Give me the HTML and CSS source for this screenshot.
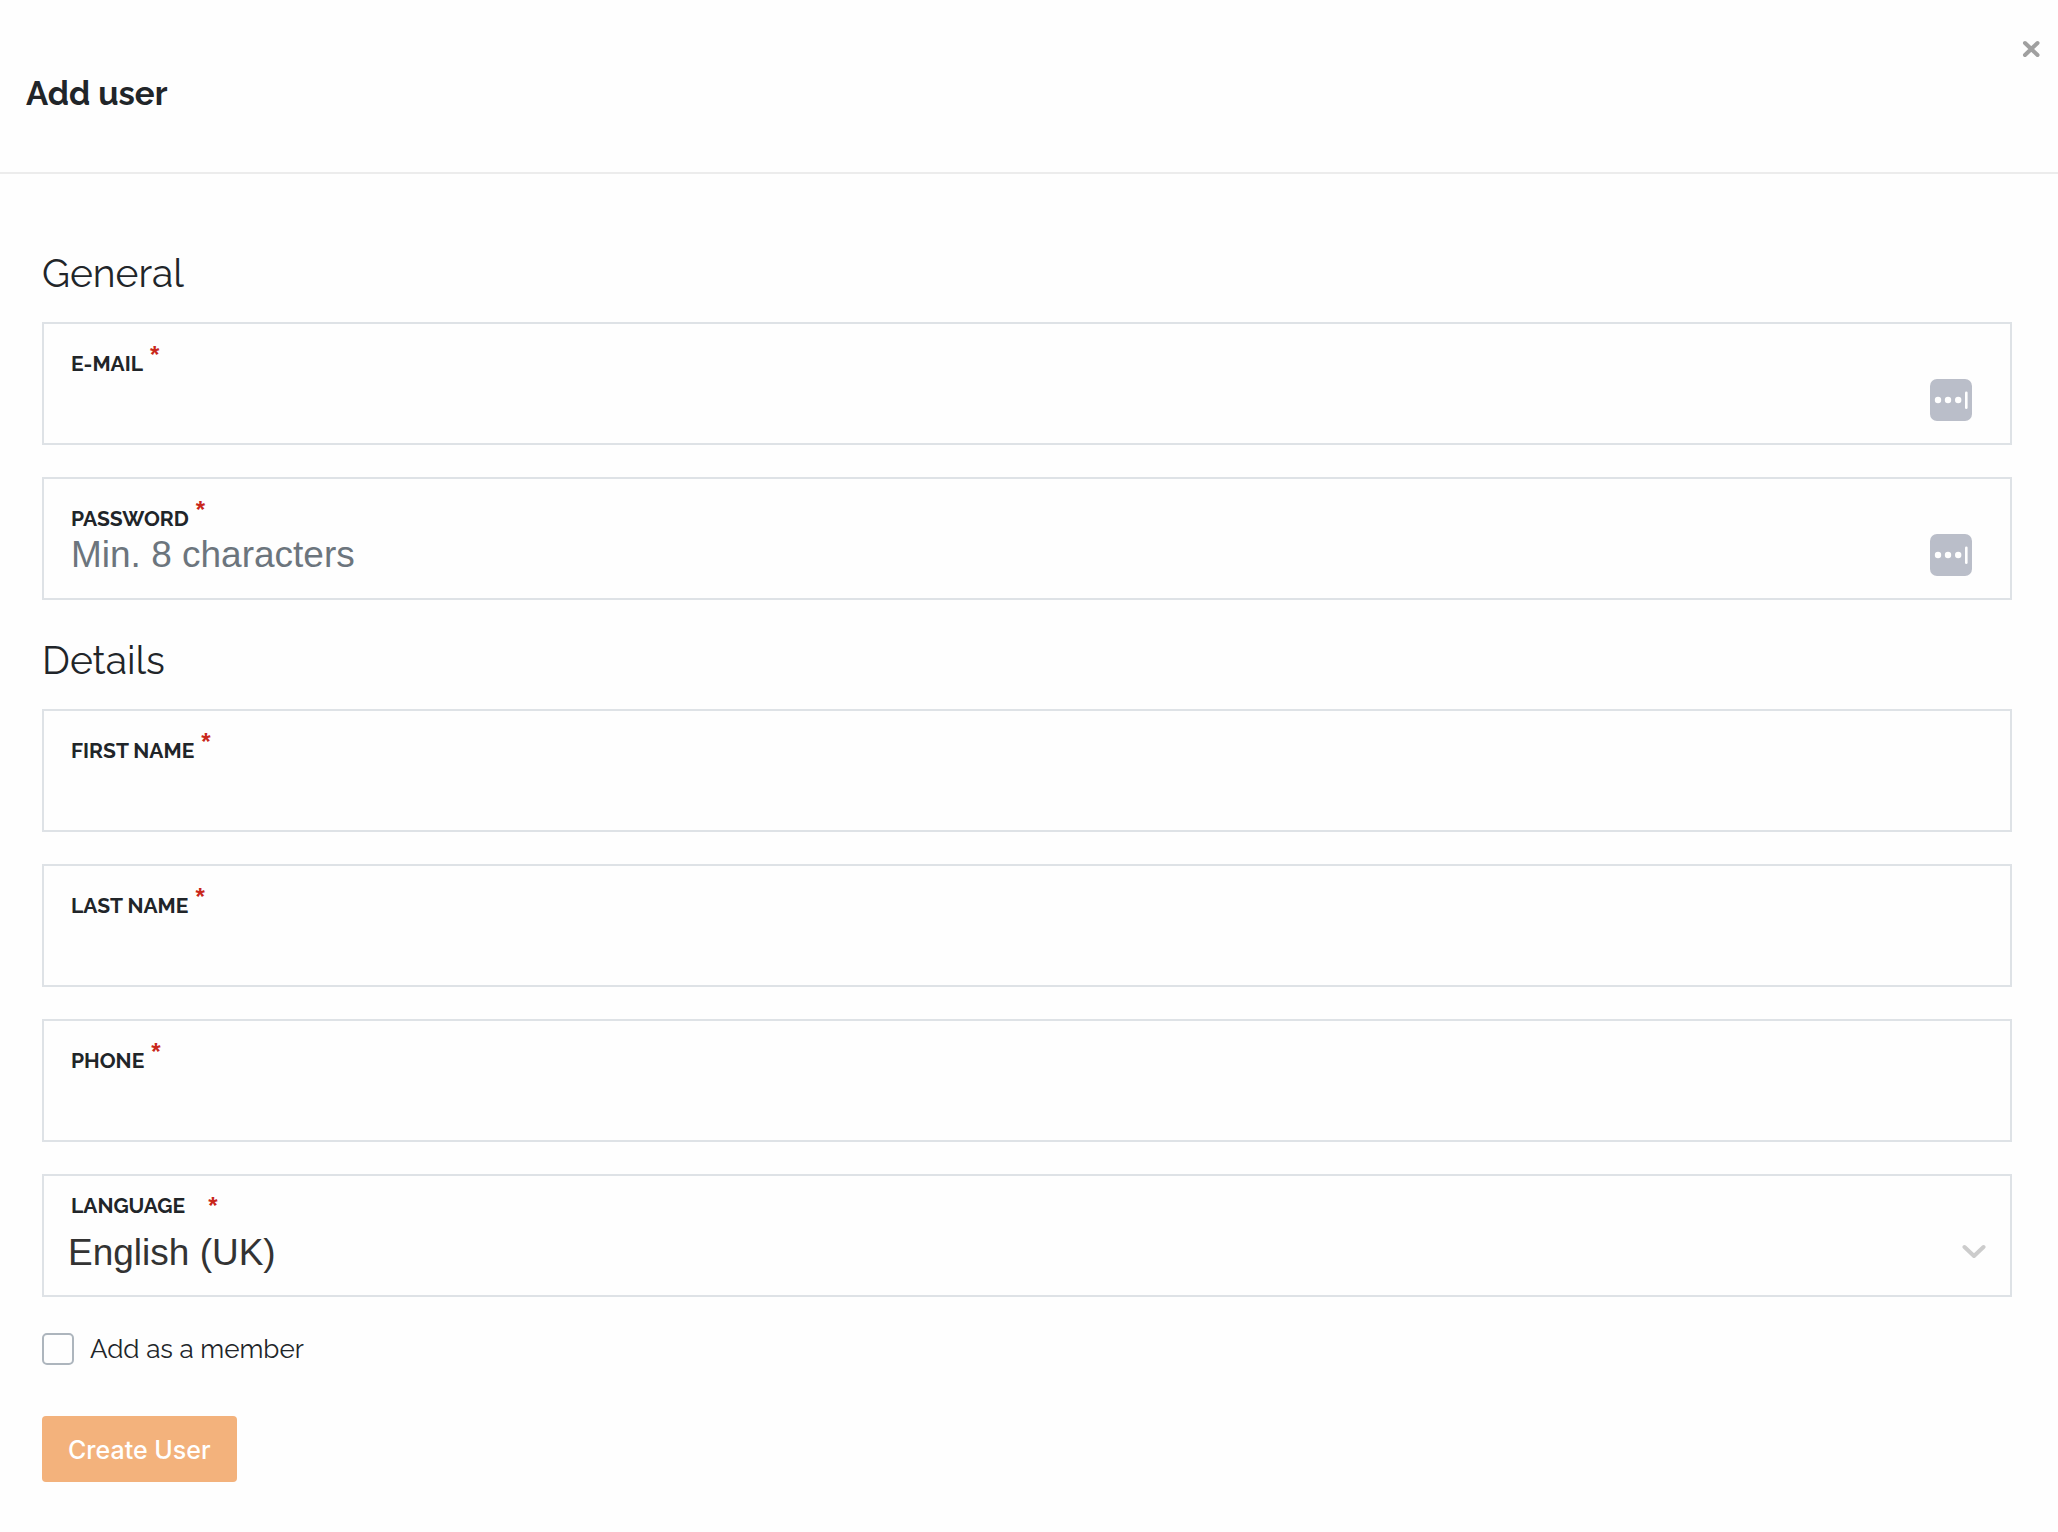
FILE: index.html
```html
<!DOCTYPE html>
<html lang="en">
<head>
<meta charset="utf-8">
<meta name="viewport" content="width=device-width, initial-scale=1">
<title>Add user</title>
<link rel="stylesheet" href="styles.css">
</head>
<body>
<header class="header">
  <h1 class="title">Add user</h1>
  <button class="close" type="button" aria-label="Close">
    <svg width="18" height="18" viewBox="0 0 18 18" aria-hidden="true"><path d="M3 3l12.500 12M15.500 3l-12.500 12"/></svg>
  </button>
</header>
<main>
<form class="form">
  <section class="section">
    <h2 class="heading">General</h2>
    <div class="fields">
      <div class="field">
        <div class="label-row"><label for="email">E-MAIL</label><span class="required">*</span></div>
        <div class="control">
          <input class="input" id="email" type="email" required>
          <button class="filler" type="button" aria-label="Fill e-mail">
            <svg width="42" height="42" viewBox="0 0 42 42" aria-hidden="true"><rect width="42" height="42" rx="7" fill="#babec9"/><g fill="#fff"><circle cx="8" cy="21" r="3.2"/><circle cx="18" cy="21" r="3.2"/><circle cx="28.200" cy="21" r="3.200"/><rect x="35" y="12.500" width="2.600" height="17.500" rx="1.300"/></g></svg>
          </button>
        </div>
      </div>
      <div class="field">
        <div class="label-row"><label for="password">PASSWORD</label><span class="required">*</span></div>
        <div class="control">
          <input class="input" id="password" type="password" placeholder="Min. 8 characters" required>
          <button class="filler" type="button" aria-label="Fill password">
            <svg width="42" height="42" viewBox="0 0 42 42" aria-hidden="true"><rect width="42" height="42" rx="7" fill="#babec9"/><g fill="#fff"><circle cx="8" cy="21" r="3.2"/><circle cx="18" cy="21" r="3.2"/><circle cx="28.200" cy="21" r="3.200"/><rect x="35" y="12.500" width="2.600" height="17.500" rx="1.300"/></g></svg>
          </button>
        </div>
      </div>
    </div>
  </section>
  <section class="section">
    <h2 class="heading">Details</h2>
    <div class="fields">
      <div class="field">
        <div class="label-row"><label for="first-name">FIRST NAME</label><span class="required">*</span></div>
        <div class="control"><input class="input" id="first-name" type="text" required></div>
      </div>
      <div class="field">
        <div class="label-row"><label for="last-name">LAST NAME</label><span class="required">*</span></div>
        <div class="control"><input class="input" id="last-name" type="text" required></div>
      </div>
      <div class="field">
        <div class="label-row"><label for="phone">PHONE</label><span class="required">*</span></div>
        <div class="control"><input class="input" id="phone" type="tel" required></div>
      </div>
      <div class="field field-select">
        <div class="label-row"><label for="language">LANGUAGE</label><span class="required">*</span></div>
        <div class="control">
          <select class="select" id="language"><option>English (UK)</option></select>
          <svg class="chevron" width="24" height="16" viewBox="0 0 24 16" aria-hidden="true"><path d="M2.500 3l9.500 9 9.500-9"/></svg>
        </div>
      </div>
    </div>
  </section>
  <div class="member">
    <input class="checkbox" id="member" type="checkbox">
    <label for="member">Add as a member</label>
  </div>
  <button class="submit" type="submit">Create User</button>
</form>
</main>
</body>
</html>
```
FILE: styles.css
```css
* {
  box-sizing: border-box;
}

body {
  margin: 0;
  background: #fefefe;
  color: #212529;
  font-family: Raleway, Lato, sans-serif;
}

button,
input,
select {
  margin: 0;
  padding: 0;
  border: 0;
  background: none;
}

svg {
  display: block;
}

.header {
  display: flex;
  align-items: flex-start;
  justify-content: space-between;
  padding: 40px 18px 58px 26px;
  border-bottom: 2px solid #ececec;
}

.title {
  margin: 34px 0 0;
  font-size: 33px;
  font-weight: 700;
  line-height: 40px;
}

.close path {
  fill: none;
  stroke: #a0a0a0;
  stroke-width: 4;
  stroke-linecap: round;
}

.form {
  padding: 75px 46px 48px 42px;
}

.section {
  margin-bottom: 36px;
}

.heading {
  margin: 0 0 25px;
  font-size: 39px;
  font-weight: 400;
  line-height: 48px;
}

.fields {
  display: grid;
  gap: 32px;
}

.field {
  padding: 25px 38px 22px 27px;
  border: 2px solid #dee2e6;
}

.label-row {
  display: flex;
  gap: 7px;
  height: 30px;
  font-size: 21px;
  font-weight: 700;
  line-height: 30px;
}

.required {
  color: #c9271b;
  font: 700 24px/12px "Liberation Sans", Arial, sans-serif;
}

.control {
  display: flex;
  align-items: center;
  height: 42px;
}

.input,
.select {
  flex: 1;
  min-width: 0;
  height: 100%;
  color: #333;
  font: 37px "Liberation Sans", Arial, sans-serif;
  outline: none;
}

.input::placeholder {
  color: #6c757d;
  opacity: 1;
}

.field-select {
  padding: 15px 24px 12px;
}

.field-select .label-row {
  gap: 23px;
  padding-left: 3px;
}

.field-select .required {
  line-height: 30px;
}

.field-select .control {
  height: 62px;
}

.select {
  appearance: none;
}

.chevron path {
  fill: none;
  stroke: #ccc;
  stroke-width: 4;
  stroke-linecap: round;
  stroke-linejoin: round;
}

.member {
  display: flex;
  align-items: center;
  gap: 16px;
  margin-bottom: 51px;
  font-size: 26px;
  line-height: 32px;
}

.checkbox {
  appearance: none;
  width: 32px;
  height: 32px;
  border: 2px solid #adb5bd;
  border-radius: 5px;
}

.submit {
  padding: 18px 26px 16px;
  border-radius: 4px;
  background: #f3b27c;
  color: #fff;
  font: 500 25px/32px Inter, sans-serif;
}
```
